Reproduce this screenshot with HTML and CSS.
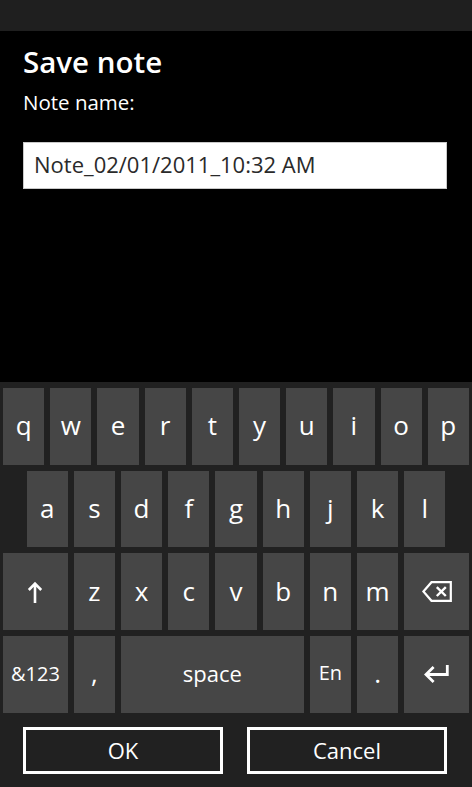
FILE: index.html
```html
<!DOCTYPE html>
<html>
<head>
<meta charset="utf-8">
<link rel="stylesheet" href="styles.css">
</head>
<body>
<div class="screen">
  <div class="statusbar"></div>
  <div class="dialog">
    <div class="title">Save note</div>
    <div class="label">Note name:</div>
    <div class="field">Note_02/01/2011_10:32 AM</div>
  </div>
  <div class="keyboard">
    <div class="row">
      <div class="key">q</div><div class="key">w</div><div class="key">e</div><div class="key">r</div><div class="key">t</div><div class="key">y</div><div class="key">u</div><div class="key">i</div><div class="key">o</div><div class="key">p</div>
    </div>
    <div class="row row-offset">
      <div class="key">a</div><div class="key">s</div><div class="key">d</div><div class="key">f</div><div class="key">g</div><div class="key">h</div><div class="key">j</div><div class="key">k</div><div class="key">l</div>
    </div>
    <div class="row">
      <div class="key wide">
        <svg class="icon" width="16" height="22" viewBox="0 0 16 22"><path d="M8 22 V3 M1.8 9 L8 2.6 L14.2 9" fill="none" stroke="#fff" stroke-width="2.6"/></svg>
      </div>
      <div class="key">z</div><div class="key">x</div><div class="key">c</div><div class="key">v</div><div class="key">b</div><div class="key">n</div><div class="key">m</div>
      <div class="key wide">
        <svg class="icon" width="30" height="21" viewBox="0 0 30 21"><path d="M1.4 10.5 L9.5 1.2 H28.8 V19.8 H9.5 Z" fill="none" stroke="#fff" stroke-width="2.2" stroke-linejoin="miter"/><path d="M14.8 6.2 L23.8 15 M23.8 6.2 L14.8 15" fill="none" stroke="#fff" stroke-width="2.4"/></svg>
      </div>
    </div>
    <div class="row">
      <div class="key wide small">&amp;123</div>
      <div class="key">,</div>
      <div class="key space">space</div>
      <div class="key small">En</div>
      <div class="key">.</div>
      <div class="key wide">
        <svg class="icon" width="25" height="18" viewBox="0 0 25 18"><path d="M2 9.5 H23.3 V0" fill="none" stroke="#fff" stroke-width="2.8"/><path d="M9.6 2 L2 9.5 L9.6 17" fill="none" stroke="#fff" stroke-width="2.8"/></svg>
      </div>
    </div>
  </div>
  <div class="actions">
    <div class="button">OK</div>
    <div class="button">Cancel</div>
  </div>
</div>
</body>
</html>
```

FILE: styles.css
```css
html, body {
  margin: 0;
  padding: 0;
  background: #000;
}

.screen {
  width: 472px;
  height: 787px;
  display: flex;
  flex-direction: column;
  font-family: "Open Sans", "Noto Sans", sans-serif;
  color: #fff;
  overflow: hidden;
}

.statusbar {
  height: 31px;
  background: #1f1f1f;
  flex: none;
}

.dialog {
  height: 351px;
  padding: 0 25px 0 23px;
  flex: none;
}

.title {
  margin-top: 13px;
  font-size: 29.5px;
  font-weight: 600;
  line-height: 36px;
}

.label {
  margin-top: 9px;
  font-size: 20.5px;
  line-height: 26px;
}

.field {
  margin-top: 27px;
  width: 424px;
  box-sizing: border-box;
  height: 47px;
  background: #fff;
  border: 1px solid #c9c9c9;
  color: #2a2a2a;
  font-size: 22px;
  line-height: 42px;
  padding: 0 0 3px 10px;
}

.keyboard {
  background: #212121;
  padding-top: 3px;
  flex: none;
}

.row {
  display: flex;
  height: 82.67px;
}

.row-offset .key:first-child {
  margin-left: calc(5% + 3px);
}

.key {
  width: calc(10% - 6px);
  margin: 3px;
  background: #464646;
  display: flex;
  align-items: center;
  justify-content: center;
  font-size: 26px;
  line-height: 76px;
  padding-bottom: 2px;
  box-sizing: border-box;
}

.key.wide {
  width: calc(15% - 6px);
  padding-bottom: 0;
}

.key.space {
  width: calc(40% - 6px);
  font-size: 22px;
}

.key.small {
  font-size: 20px;
}

.icon {
  display: block;
}

.actions {
  flex: 1;
  background: #212121;
  display: flex;
  gap: 24px;
  padding: 11px 25px 0 23px;
}

.button {
  width: 200px;
  height: 47px;
  box-sizing: border-box;
  border: 3px solid #fff;
  text-align: center;
  font-size: 22px;
  line-height: 41px;
}
```
